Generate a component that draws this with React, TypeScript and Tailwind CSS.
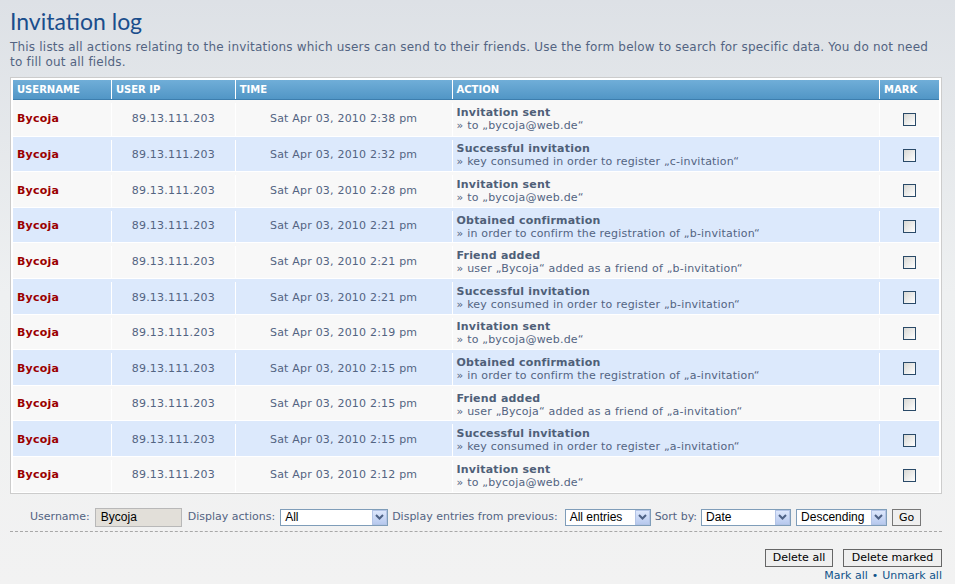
import React from "react";

type Row = { time: string; title: string; detail: string };

const rows: Row[] = [
  { time: "Sat Apr 03, 2010 2:38 pm", title: "Invitation sent", detail: "» to „bycoja@web.de“" },
  { time: "Sat Apr 03, 2010 2:32 pm", title: "Successful invitation", detail: "» key consumed in order to register „c-invitation“" },
  { time: "Sat Apr 03, 2010 2:28 pm", title: "Invitation sent", detail: "» to „bycoja@web.de“" },
  { time: "Sat Apr 03, 2010 2:21 pm", title: "Obtained confirmation", detail: "» in order to confirm the registration of „b-invitation“" },
  { time: "Sat Apr 03, 2010 2:21 pm", title: "Friend added", detail: "» user „Bycoja“ added as a friend of „b-invitation“" },
  { time: "Sat Apr 03, 2010 2:21 pm", title: "Successful invitation", detail: "» key consumed in order to register „b-invitation“" },
  { time: "Sat Apr 03, 2010 2:19 pm", title: "Invitation sent", detail: "» to „bycoja@web.de“" },
  { time: "Sat Apr 03, 2010 2:15 pm", title: "Obtained confirmation", detail: "» in order to confirm the registration of „a-invitation“" },
  { time: "Sat Apr 03, 2010 2:15 pm", title: "Friend added", detail: "» user „Bycoja“ added as a friend of „a-invitation“" },
  { time: "Sat Apr 03, 2010 2:15 pm", title: "Successful invitation", detail: "» key consumed in order to register „a-invitation“" },
  { time: "Sat Apr 03, 2010 2:12 pm", title: "Invitation sent", detail: "» to „bycoja@web.de“" },
];

function Chevron() {
  return (
    <svg width="9" height="6" viewBox="0 0 9 6">
      <path d="M1 1 L4.5 4.5 L8 1" fill="none" stroke="#4d6185" strokeWidth="2" />
    </svg>
  );
}

function FakeSelect({ value, width }: { value: string; width: string }) {
  return (
    <div className={`flex h-[17px] items-center border border-[#7f9db9] bg-white ${width}`}>
      <span className="flex-1 pl-[4px] font-['Liberation_Sans'] text-[12px] leading-none text-black">{value}</span>
      <span className="flex h-[15px] w-[15px] items-center justify-center border border-[#b3c4e6] bg-gradient-to-b from-[#dde7fc] to-[#b7c9ee]">
        <Chevron />
      </span>
    </div>
  );
}

function Checkbox() {
  return (
    <div className="h-[13px] w-[13px] border border-[#2a4a68] bg-gradient-to-br from-[#d8d8d4] to-[#ffffff]" />
  );
}

export default function App() {
  return (
    <div className="min-h-[584px] w-[955px] bg-gradient-to-b from-[#dde1e6] via-[#eef0f1] to-[#f2f2f2] font-['DejaVu_Sans',sans-serif] text-[11px] text-[#536482]">
      <div className="pl-[10px] pr-[13px] pt-[7px]">
        <h2 className="font-['Lato',sans-serif] text-[23px] leading-[28px] text-[#1a4e8c]">Invitation log</h2>
        <p className="mt-[5px] w-[932px] text-[12px] leading-[15px] tracking-[0.2px] text-[#536482]">
          This lists all actions relating to the invitations which users can send to their friends. Use the form below to search for specific data. You do not need to fill out all fields.
        </p>

        <div className="mt-[7px] w-[932px] border border-[#cccccc] bg-white px-[2px] pt-[2px] pb-[1px]">
          <div className="flex h-[20px] border-b border-[#3d7eae] bg-gradient-to-b from-[#70aed8] to-[#5196c6] text-[10px] font-bold leading-[19px] text-white">
            <div className="w-[98px] pl-[4px]">USERNAME</div>
            <div className="w-[124px] border-l border-white pl-[4px]">USER IP</div>
            <div className="w-[217px] border-l border-white pl-[4px]">TIME</div>
            <div className="w-[428px] border-l border-white pl-[4px]">ACTION</div>
            <div className="w-[60px] border-l border-white pl-[4px]">MARK</div>
          </div>
          {rows.map((r, i) => (
            <div
              key={i}
              className={`flex h-[35.6px] pt-[3px] tracking-[0.2px] ${i > 0 ? "border-t border-white" : ""} ${i % 2 === 0 ? "bg-[#f8f8f8]" : "bg-[#dce9fc]"}`}
            >
              <div className="flex w-[98px] items-center pl-[4px] font-bold text-[#9b0000]">Bycoja</div>
              <div className="flex w-[124px] items-center justify-center border-l border-white">89.13.111.203</div>
              <div className="flex w-[217px] items-center justify-center border-l border-white">{r.time}</div>
              <div className="flex w-[428px] flex-col justify-center border-l border-white pl-[4px] leading-[13px]">
                <span className="font-bold text-[#4f5f78]">{r.title}</span>
                <span>{r.detail}</span>
              </div>
              <div className="flex w-[60px] items-center justify-center border-l border-white">
                <Checkbox />
              </div>
            </div>
          ))}
        </div>

        <div className="mt-[14px] flex h-[19px] w-[932px] items-center pl-[20px]">
          <span>Username:</span>
          <div className="ml-[5px] flex h-[19px] w-[87px] items-center border border-[#b8b8b8] bg-[#e2dfd9] pl-[5px] font-['Liberation_Sans'] text-[12px] text-black">
            Bycoja
          </div>
          <span className="ml-[6px]">Display actions:</span>
          <div className="ml-[5px]">
            <FakeSelect value="All" width="w-[108px]" />
          </div>
          <span className="ml-[4px]">Display entries from previous:</span>
          <div className="ml-[7px]">
            <FakeSelect value="All entries" width="w-[86px]" />
          </div>
          <span className="ml-[4px]">Sort by:</span>
          <div className="ml-[4px]">
            <FakeSelect value="Date" width="w-[90px]" />
          </div>
          <div className="ml-[5px]">
            <FakeSelect value="Descending" width="w-[91px]" />
          </div>
          <button className="ml-[5px] h-[17px] w-[29px] border border-[#777] bg-[#efefef] font-['DejaVu_Sans'] text-[11px] leading-[15px] text-black">
            Go
          </button>
        </div>

        <div className="mt-[4px] w-[932px] border-t border-dashed border-[#a8a8a8]" />

        <div className="mt-[17px] flex w-[932px] justify-end gap-[10px]">
          <button className="h-[18px] w-[68px] border border-[#666] bg-[#efefef] text-[11px] leading-[16px] text-black">
            Delete all
          </button>
          <button className="h-[18px] w-[99px] border border-[#666] bg-[#efefef] text-[11px] leading-[16px] text-black">
            Delete marked
          </button>
        </div>
        <div className="mt-[2px] flex w-[932px] justify-end leading-[13px] text-[#105289]">
          <span>Mark all</span>
          <span className="mx-[4px]">•</span>
          <span>Unmark all</span>
        </div>
      </div>
    </div>
  );
}
